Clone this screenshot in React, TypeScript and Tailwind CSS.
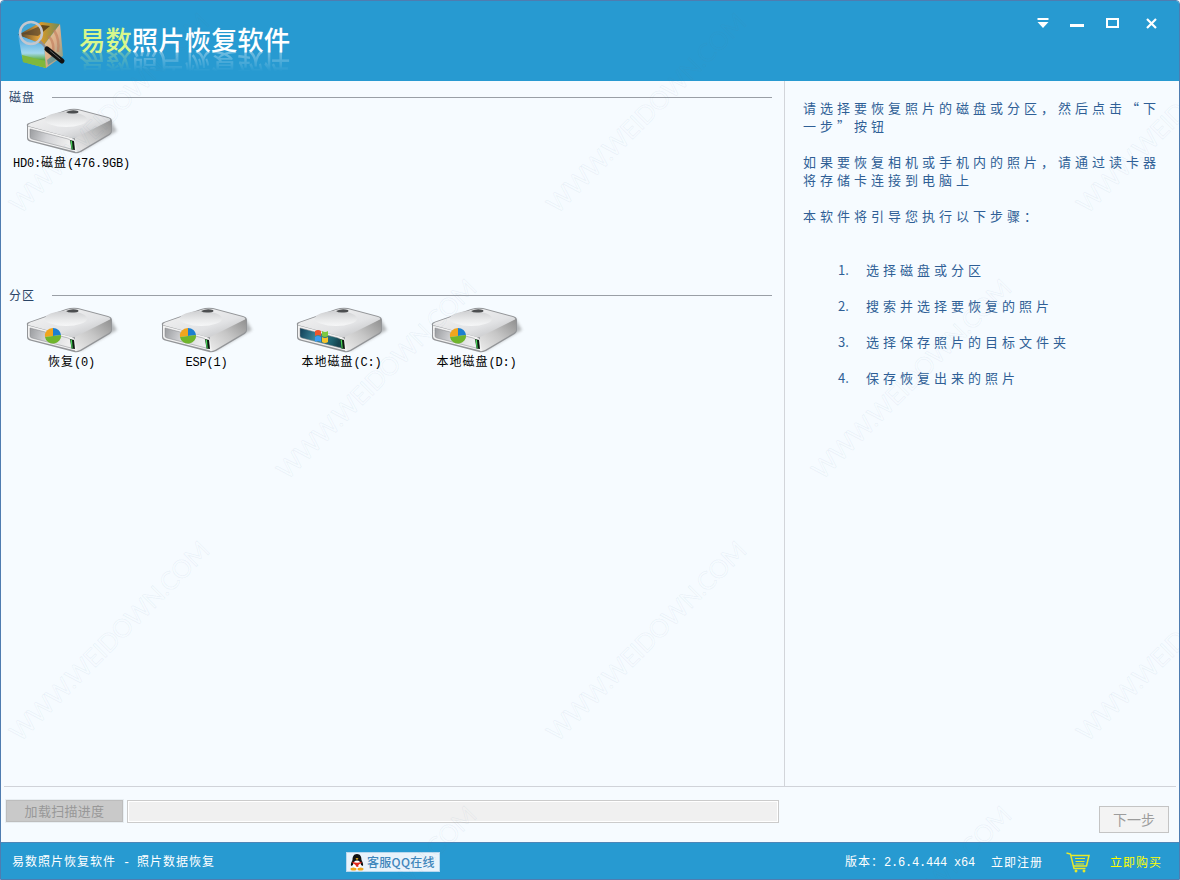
const cjk = `font-['SimSun','Noto_Sans_CJK_SC','Liberation_Mono',monospace]`

// positions of the download-site watermark, repeated over the whole window
const watermarks = [
    [375, -150], [910, -150],
    [108, 112], [645, 112], [1175, 112],
    [375, 378], [910, 378],
    [108, 640], [645, 640], [1175, 640],
    [375, 905], [910, 905],
]

const drives = [
    { label: <>恢复<Latin>(0)</Latin></>, badge: 'pie' },
    { label: <Latin>ESP(1)</Latin>, badge: 'pie' },
    { label: <>本地磁盘<Latin>(C:)</Latin></>, badge: 'windows' },
    { label: <>本地磁盘<Latin>(D:)</Latin></>, badge: 'pie' },
]

const intro = [
    ['请选择要恢复照片的磁盘或分区，然后点击“下', '一步”按钮'],
    ['如果要恢复相机或手机内的照片，请通过读卡器', '将存储卡连接到电脑上'],
    ['本软件将引导您执行以下步骤：'],
]

const steps = ['选择磁盘或分区', '搜索并选择要恢复的照片', '选择保存照片的目标文件夹', '保存恢复出来的照片']

function Latin({ children }: { children: React.ReactNode }) {
    return <span className="font-['Liberation_Mono',monospace] text-[12px] tracking-[-0.2px] whitespace-pre">{children}</span>
}

function DriveIcon({ badge }: { badge?: string }) {
    const teal = badge === 'windows'
    return (
        <svg width="100" height="50" viewBox="0 0 100 50" className="block ml-[16px]">
            <defs>
                <linearGradient id="topFace" x1="0" y1="0" x2="1" y2="1">
                    <stop offset="0" stopColor="#f4f4f4" />
                    <stop offset="0.6" stopColor="#e2e3e5" />
                    <stop offset="1" stopColor="#b8b9bb" />
                </linearGradient>
                <linearGradient id="sideFace" x1="0" y1="1" x2="1" y2="0">
                    <stop offset="0" stopColor="#ececec" />
                    <stop offset="0.5" stopColor="#c6c6c6" />
                    <stop offset="1" stopColor="#8f8f8f" />
                </linearGradient>
                <linearGradient id="disc" x1="0" y1="0" x2="0" y2="1">
                    <stop offset="0" stopColor="#cfd0d2" />
                    <stop offset="0.6" stopColor="#e9eaeb" />
                    <stop offset="1" stopColor="#f6f7f8" />
                </linearGradient>
                <linearGradient id="panel" x1="0" y1="0" x2="1" y2="0.2">
                    <stop offset="0" stopColor="#9a9c9f" />
                    <stop offset="0.45" stopColor="#d2d3d6" />
                    <stop offset="1" stopColor="#eeeeee" />
                </linearGradient>
                <linearGradient id="tealPanel" x1="0" y1="0" x2="1" y2="0.2">
                    <stop offset="0" stopColor="#0f3d56" />
                    <stop offset="0.45" stopColor="#3f8b9e" />
                    <stop offset="0.85" stopColor="#1d5f6c" />
                    <stop offset="1" stopColor="#15444f" />
                </linearGradient>
                <filter id="soft" x="-20%" y="-20%" width="140%" height="140%">
                    <feGaussianBlur stdDeviation="1.6" />
                </filter>
            </defs>
            <path d="M60 47 L97 26 L90 14 L60 30 Z" fill="#555" opacity="0.4" filter="url(#soft)" />
            <path d="M7 21 Q6 19 9 18 L46 5 Q52 3 58 4 L88 12 Q92 13 92 16 L92 26 Q92 29 88 31 L61 47 Q57 49 54 48 L10 36.500 Q7 35.500 7 33 Z" fill="#939598" />
            <path d="M8 21 Q7.500 19.500 10 18.500 L46 6 Q52 4 58 5 L88 13 Q91 14 90 16 L60 32 Q56 34 52 33 Z" fill="url(#topFace)" />
            <path d="M55 33 L91 15 L91 26 Q91 28 87 30 L60 46 Q57 47.500 55 47 Z" fill="url(#sideFace)" />
            <path d="M8 21.500 L50 32.500 Q54 33.500 55 36 L57 47 L11 35.500 Q8 34.500 8 32.500 Z" fill="#f2f2f2" />
            <path d="M10 24 L48 34 Q50.500 34.700 51.500 37 L53 44.500 L12 34 Q10 33.500 10 32 Z" fill={teal ? 'url(#tealPanel)' : 'url(#panel)'} stroke="#85878a" strokeWidth="0.5" />
            <ellipse cx="46" cy="14.500" rx="21" ry="7.500" fill="url(#disc)" />
            <path d="M46 7 Q52 4 58 6 Q60 8 54 8.500 Q48 9 46 7 Z" fill="#4c4e50" />
            <path d="M50 35 L54 36 L55 45 L51.500 44.500 Z" fill="#0e1a10" />
            <path d="M50.500 35.500 L52 36 L52.700 44.500 L51.600 44.500 Z" fill="#49d45a" />
            {badge === 'pie' && (
                <g>
                    <path d="M33 32 L33 24 A8 7.500 0 0 0 25 33 Z" fill="#f0a51e" />
                    <path d="M33 32 L33 24 A8 7.500 0 0 1 41 31 Z" fill="#1d7fd0" />
                    <path d="M33 32 L41 31 A8 7.500 0 0 1 25 33 Z" fill="#6fb52c" />
                </g>
            )}
            {badge === 'windows' && (
                <g>
                    <path d="M25 27 Q28 25 31 27 L31 32 Q28 30 25 32 Z" fill="#f0562c" />
                    <path d="M32 27 Q35 29 38 27 L38 32 Q35 34 32 32 Z" fill="#7cc840" />
                    <path d="M25 33 Q28 31 31 33 L31 38 Q28 36 25 38 Z" fill="#3c9cf2" />
                    <path d="M32 33 Q35 35 38 33 L38 38 Q35 40 32 38 Z" fill="#f6c42a" />
                </g>
            )}
        </svg>
    )
}

function LogoIcon() {
    return (
        <svg width="70" height="60" viewBox="0 0 70 60" className="shrink-0">
            <defs>
                <linearGradient id="cubeLeft" x1="0" y1="0" x2="0" y2="1">
                    <stop offset="0" stopColor="#3f9fdc" />
                    <stop offset="0.55" stopColor="#a4d8ee" />
                    <stop offset="0.75" stopColor="#5fae46" />
                    <stop offset="1" stopColor="#d8cf3a" />
                </linearGradient>
                <linearGradient id="cubeRight" x1="0" y1="0" x2="1" y2="1">
                    <stop offset="0" stopColor="#e6d39a" />
                    <stop offset="0.5" stopColor="#dcae8a" />
                    <stop offset="1" stopColor="#6f9a86" />
                </linearGradient>
                <linearGradient id="cubeTop" x1="0" y1="0" x2="1" y2="0">
                    <stop offset="0" stopColor="#2c1d0c" />
                    <stop offset="0.5" stopColor="#e29a22" />
                    <stop offset="1" stopColor="#6f8a5a" />
                </linearGradient>
            </defs>
            <path d="M8 23 L31 10 L50 12 L34 33 Z" fill="url(#cubeTop)" />
            <path d="M12 22 L32 13 L40 14 L28 24 Z" fill="#3a2610" opacity="0.7" />
            <path d="M8 23 L34 33 L36 56 L13 50 Z" fill="url(#cubeLeft)" />
            <path d="M12 43 L35 49 L36 56 L13 50 Z" fill="#7fb83c" />
            <path d="M34 33 L50 12 L53 44 L36 56 Z" fill="url(#cubeRight)" />
            <path d="M38 24 Q46 30 42 46 M44 18 Q50 28 48 40" stroke="#c07a5a" strokeWidth="2.500" fill="none" opacity="0.6" />
            <path d="M37 48 L46 41 L47 47 L38 53 Z" fill="#4f8f9a" opacity="0.7" />
            <circle cx="21" cy="21" r="11" fill="#ffffff" fillOpacity="0.12" stroke="#c3c7cf" strokeWidth="2.500" />
            <path d="M30 29 L37 37" stroke="#8c8f94" strokeWidth="2" />
            <path d="M37 37 L52 49" stroke="#111" strokeWidth="5" strokeLinecap="round" />
            <path d="M40 38.500 L50 47" stroke="#666" strokeWidth="1" strokeLinecap="round" />
        </svg>
    )
}

function SectionHeader({ title }: { title: string }) {
    return (
        <div className="h-4 flex items-center pl-[5px] pr-[12px]">
            <span className={`w-[43px] text-[12px] tracking-[1px] text-[#2a4466] ${cjk}`}>{title}</span>
            <div className="flex-1 h-px bg-[#9a9fa6]" />
        </div>
    )
}

function DriveLabel({ children }: { children: React.ReactNode }) {
    return (
        <div className="h-[17px] -mt-[2px] w-[135px] text-center text-[12px] leading-[17px] tracking-[1px] text-black whitespace-nowrap">
            {children}
        </div>
    )
}

function WindowButtons() {
    return (
        <div className="absolute top-[16px] right-[22px] flex items-start text-white">
            <svg width="12" height="12" viewBox="0 0 12 12" className="mr-[21px]">
                <rect x="0.5" y="1" width="11" height="2" fill="currentColor" />
                <path d="M0.5 5 H11.5 L6 11 Z" fill="currentColor" />
            </svg>
            <div className="w-[14px] h-[3px] bg-white mt-[7px] mr-[22px]" />
            <div className="w-[13px] h-[10px] border-2 border-white mt-[1px] mr-[27px]" />
            <svg width="11" height="11" viewBox="0 0 11 11" className="mt-[1px]">
                <path d="M1 1 L10 10 M10 1 L1 10" stroke="currentColor" strokeWidth="2.2" />
            </svg>
        </div>
    )
}

function QQBadge() {
    return (
        <div className="w-[94px] h-[20px] bg-[#e9f3fb] border border-[#b8d8ee] flex items-center pl-[2px] gap-[2px]">
            <svg width="16" height="18" viewBox="0 0 16 18" className="shrink-0">
                <path d="M8 1 C4.500 1 3.500 4 3.500 7 C2.500 9 1.500 11 2 13 L4 12 L12 12 L14 13 C14.500 11 13.500 9 12.500 7 C12.500 4 11.500 1 8 1 Z" fill="#111" />
                <ellipse cx="8" cy="12" rx="4" ry="4.500" fill="#fff" />
                <path d="M3.500 8.500 Q8 11 12.500 8.500 L12.500 10 Q8 12 9.500 14 L7 13.500 Q7.500 12 3.500 10 Z" fill="#e0281c" />
                <path d="M6.500 5.500 Q8 4.500 9.500 5.500 L8 7 Z" fill="#f2b71e" />
                <ellipse cx="4.500" cy="16" rx="3" ry="1.500" fill="#f2a81e" />
                <ellipse cx="11.500" cy="16" rx="3" ry="1.500" fill="#f2a81e" />
            </svg>
            <span className="text-[12px] leading-none tracking-[0.3px] font-medium text-[#3f86bb] font-['Noto_Sans_CJK_SC',sans-serif] whitespace-nowrap">客服QQ在线</span>
        </div>
    )
}

function CartIcon() {
    return (
        <svg width="24" height="21" viewBox="0 0 24 21" fill="none" stroke="#e8e82a" strokeWidth="1.500" className="block">
            <path d="M0.500 1 L4.500 2 L8 16.500 H19.500" />
            <path d="M5 3.500 H23 L20.500 14 H7.500" />
            <path d="M9 6.500 H19 M9.500 9.500 H18.500 M9.500 12 H18" strokeWidth="1" />
            <circle cx="10" cy="19" r="1.200" fill="#e8e82a" strokeWidth="0.500" />
            <circle cx="18" cy="19" r="1.200" fill="#e8e82a" strokeWidth="0.500" />
        </svg>
    )
}

export default function App() {
    return (
        <div lang="zh-CN" className={`relative w-[1180px] h-[880px] overflow-hidden bg-[#f6fbff] flex flex-col border border-[#4f7cb0] rounded-t-[4px] ${cjk}`}>
            {/* Title bar */}
            <div className="relative h-[80px] shrink-0 bg-[#279ad1] flex items-start pl-[9px] pt-[11px]">
                <LogoIcon />
                <div className="relative -ml-px mt-[12px] text-[26.4px] leading-[30px] font-medium font-['Noto_Sans_CJK_SC',sans-serif] whitespace-nowrap text-white">
                    <span className="text-[#d8f78c]">易数</span>照片恢复软件
                    <div className="absolute left-0 top-[25px] -scale-y-100 opacity-40 [mask-image:linear-gradient(to_top,black,transparent_75%)]">
                        <span className="text-[#d8f78c]">易数</span>照片恢复软件
                    </div>
                </div>
                <WindowButtons />
            </div>

            {/* Main area */}
            <div className="flex-1 flex min-h-0">
                <div className="w-[780px] shrink-0 border-r border-[#d2d5da] pt-[8px] pl-[3px] box-content">
                    <SectionHeader title="磁盘" />
                    <div className="h-[182px] flex items-start">
                        <div className="w-[135px]">
                            <DriveIcon />
                            <DriveLabel><Latin>HD0:</Latin>磁盘<Latin>(476.9GB)</Latin></DriveLabel>
                        </div>
                    </div>
                    <SectionHeader title="分区" />
                    <div className="flex items-start pt-px">
                        {drives.map((drive, i) => (
                            <div key={i} className="w-[135px]">
                                <DriveIcon badge={drive.badge} />
                                <DriveLabel>{drive.label}</DriveLabel>
                            </div>
                        ))}
                    </div>
                </div>

                <div className="flex-1 pl-[18px] pt-[18px] text-[13px] leading-[18px] tracking-[4px] text-[#2f5f96] whitespace-nowrap">
                    <div className="flex flex-col gap-[18px]">
                        {intro.map((para, i) => (
                            <div key={i}>
                                {para.map((line) => <div key={line}>{line}</div>)}
                            </div>
                        ))}
                    </div>
                    <div className="flex flex-col gap-[18px] mt-[36px] pl-[35px]">
                        {steps.map((step, i) => (
                            <div key={step} className="flex">
                                <span className="w-[28px] tracking-normal">{i + 1}.</span>
                                <span>{step}</span>
                            </div>
                        ))}
                    </div>
                </div>
            </div>

            {/* Progress strip */}
            <div className="relative h-[56px] shrink-0 mx-[3px] border-t border-[#d0d3d9] flex items-start pt-[13px] pl-[2px]">
                <div className="w-[117px] h-[22px] bg-[#c9c9c9] border border-[#bdbdbd] outline outline-1 outline-[#e8eef2] flex items-center justify-center text-[13px] tracking-[0.300px] text-[#989898]">
                    加载扫描进度
                </div>
                <div className="ml-[4px] w-[652px] h-[23px] border border-[#cbcbcb] bg-[#f0f0f0] outline outline-1 -outline-offset-2 outline-white" />
                <div className="absolute right-[7px] top-[19px] w-[70px] h-[27px] border border-[#c4c4c4] bg-[#f3f3f3] flex items-center justify-center text-[14px] text-[#9c9c9c]">
                    下一步
                </div>
            </div>

            {/* Status bar */}
            <div className="h-[37px] shrink-0 bg-[#279ad1] border-t border-[#4d86b8] flex items-center pl-[11px] pr-[17px] pt-[2px] text-[12px] tracking-[1px] text-white whitespace-nowrap">
                <span className="w-[334px]">易数照片恢复软件<Latin> - </Latin>照片数据恢复</span>
                <QQBadge />
                <span className="ml-auto">版本：<Latin>2.6.4.444 x64</Latin></span>
                <span className="ml-[16px]">立即注册</span>
                <span className="ml-[23px]"><CartIcon /></span>
                <span className="ml-[20px] text-[#ffff00]">立即购买</span>
            </div>

            {/* Watermark */}
            <div className="absolute inset-0 pointer-events-none">
                {watermarks.map(([x, y]) => (
                    <span
                        key={`${x}-${y}`}
                        style={{ left: x, top: y }}
                        className="absolute -translate-x-1/2 -translate-y-1/2 -rotate-45 whitespace-nowrap text-[25px] tracking-[-0.5px] font-['Lato',sans-serif] text-transparent [-webkit-text-stroke:1px_rgba(90,130,160,0.07)]"
                    >
                        WWW.WEIDOWN.COM
                    </span>
                ))}
            </div>
        </div>
    )
}
